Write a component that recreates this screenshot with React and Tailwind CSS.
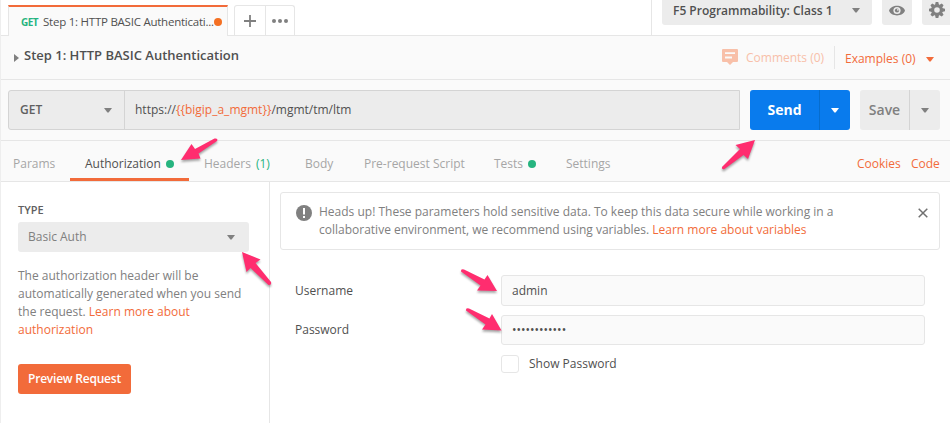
import React from "react";

const GEAR_TEETH = [0, 45, 90, 135, 180, 225, 270, 315];

function Caret({ className = "" }) {
  return (
    <svg className={`block shrink-0 ${className}`} width="8" height="5" viewBox="0 0 8 5" fill="currentColor">
      <path d="M0 0h8L4.6 4.6h-1.2z" />
    </svg>
  );
}

function TopBar() {
  return (
    <div className="flex h-9 border-b border-[#e6e6e6] bg-white">
      <div className="ml-[7px] mt-[5px] flex h-[31px] w-[220px] shrink-0 items-center border-x border-t-2 border-x-[#e6e6e6] border-t-[#f26b3a] bg-[#fafafa] pl-3">
        <span className="w-[22px] text-[10px] font-bold leading-4 text-[#26b47f]"><span className="tracking-[-0.55px]">GET</span></span>
        <span className="w-[171px] whitespace-nowrap text-[11.5px] leading-4 tracking-[-0.24px]">Step 1: HTTP BASIC Authenticati...</span>
        <span className="h-2 w-2 shrink-0 rounded-full bg-[#f47023]" />
      </div>
      <div className="ml-[6px] mt-[5px] flex h-[30px] w-[61px] shrink-0 rounded-t-[3px] border-x border-t border-[#e6e6e6] text-[#808080]">
        <div className="flex w-[31px] items-center justify-center border-r border-[#e6e6e6]">
          <svg width="12" height="12" viewBox="0 0 12 12" stroke="currentColor" strokeWidth="1.8"><path d="M6 0v12M0 6h12" /></svg>
        </div>
        <div className="flex w-[28px] items-center justify-center">
          <svg width="16" height="4" viewBox="0 0 16 4" fill="currentColor"><circle cx="2" cy="2" r="2" /><circle cx="8" cy="2" r="2" /><circle cx="14" cy="2" r="2" /></svg>
        </div>
      </div>
      <div className="ml-auto flex h-full w-[299px] shrink-0 border-l border-[#e6e6e6] pl-[10px] text-[#808080]">
        <div className="flex h-[25px] w-[210px] items-center justify-between rounded-b-[3px] bg-[#ececec] pb-[4px] pl-[11px] pr-3">
          <span className="whitespace-nowrap text-[12px] font-semibold leading-4 text-[#505050]">F5 Programmability: Class 1</span>
          <Caret />
        </div>
        <div className="ml-[10px] flex h-[25px] w-[30px] justify-center rounded-b-[3px] bg-[#ececec] pt-[5px]">
          <svg width="16" height="11" viewBox="0 0 16 11">
            <path d="M0 5.5C2-1 14-1 16 5.5C14 12 2 12 0 5.5Z" fill="#808080" />
            <circle cx="8" cy="5.5" r="3.6" fill="#ececec" />
            <circle cx="8" cy="5.5" r="2.1" fill="#808080" />
            <circle cx="8.9" cy="4.8" r=".9" fill="#ececec" />
          </svg>
        </div>
        <div className="ml-[10px] flex h-[25px] w-[28px] rounded-bl-[3px] bg-[#ececec] pl-[7px] pt-[2px]">
          <svg width="16" height="16" viewBox="-8 -8 16 16">
            {GEAR_TEETH.map((a) => (
              <path key={a} d="M-2-5L-1.3-8H1.3L2-5Z" fill="#808080" transform={`rotate(${a})`} />
            ))}
            <circle r="4.3" fill="none" stroke="#808080" strokeWidth="3" />
          </svg>
        </div>
      </div>
    </div>
  );
}

function TitleRow() {
  return (
    <div className="flex h-[44px] items-center border-b border-[#e6e6e6]">
      <svg className="ml-[13px] mt-px" width="5" height="8" viewBox="0 0 5 8"><path d="M0 0L5 4L0 8Z" fill="#808080" /></svg>
      <span className="ml-[5px] pb-[5px] text-[13px] font-semibold leading-5 text-[#505050]">Step 1: HTTP BASIC Authentication</span>
      <div className="ml-auto flex items-center text-[#f26b3a]">
        <svg className="mt-[-2px]" width="16" height="16" viewBox="0 0 16 16">
          <path d="M1 0H15Q16 0 16 1V12Q16 13 15 13H11L8 16L5 13H1Q0 13 0 12V1Q0 0 1 0Z" fill="#f8c0a9" />
          <path d="M3 4.2H13M3 8.5H10" stroke="#fafafa" strokeWidth="1.8" />
        </svg>
        <span className="ml-2 w-[88px] whitespace-nowrap text-[12px] leading-4 text-[#f8c0a9]">Comments (0)</span>
        <span className="h-[23px] w-px bg-[#e6e6e6]" />
        <span className="ml-[10px] w-[81px] whitespace-nowrap pt-[2px] text-[12px] leading-4">Examples (0)</span>
        <Caret className="mr-[16px] mt-[3px]" />
      </div>
    </div>
  );
}

function RequestRow() {
  return (
    <div className="flex h-[61px] border-b border-[#e6e6e6] pl-[7px] pt-[10px]">
      <div className="flex h-10 w-[732px] rounded-l-[3px] border border-[#d4d4d4] bg-[#ececec]">
        <div className="flex w-[116px] items-center justify-between border-r border-[#d4d4d4] pl-[11px] pr-3">
          <span className="text-[12px] font-semibold leading-4 text-[#606060]">GET</span>
          <Caret className="text-[#808080]" />
        </div>
        <span className="pl-[10px] pt-[11px] text-[12px] leading-4 text-[#505050]">
          <span>https://<span className="text-[#f26b3a]">{"{{bigip_a_mgmt}}"}</span>/mgmt/tm/ltm</span>
        </span>
      </div>
      <div className="ml-[10px] flex h-10 w-[100px] rounded-[3px] bg-[#097bed] text-white">
        <div className="flex w-[70px] items-center justify-center border-r border-[#066dce] text-[14px] font-bold leading-5"><span>Send</span></div>
        <div className="flex flex-1 items-center justify-center"><Caret /></div>
      </div>
      <div className="ml-[10px] flex h-10 w-[80px] rounded-[3px] bg-[#ececec] text-[#808080]">
        <div className="flex w-[50px] items-center justify-center border-r border-[#d4d4d4] text-[14px] font-semibold leading-5"><span>Save</span></div>
        <div className="flex flex-1 items-center justify-center"><Caret /></div>
      </div>
    </div>
  );
}

function Dot() {
  return <span className="ml-[5px] h-2 w-2 shrink-0 rounded-full bg-[#26b47f]" />;
}

function TabRow() {
  return (
    <div className="flex h-[41px] items-stretch whitespace-nowrap border-b border-[#e6e6e6] text-[12px] leading-4 text-[#a6a6a6]">
      <div className="flex w-[69px] items-center pt-[6px] pl-3"><span>Params</span></div>
      <div className="flex w-[119px] items-center border-b-[3px] border-[#f26b3a] pl-[15px] pt-[9px] text-[#505050]"><span>Authorization</span><Dot /></div>
      <div className="flex w-[101px] items-center pt-[6px] pl-[15px]"><span>Headers</span><span className="ml-[5px] text-[#26b47f]">(1)</span></div>
      <div className="flex w-[59px] items-center pt-[6px] pl-[15px]"><span>Body</span></div>
      <div className="flex w-[130px] items-center pt-[6px] pl-[15px]"><span>Pre-request Script</span></div>
      <div className="flex w-[72px] items-center pt-[6px] pl-[15px]"><span>Tests</span><Dot /></div>
      <div className="flex items-center pt-[6px] pl-[15px]"><span>Settings</span></div>
      <div className="ml-auto flex items-center pt-[6px] text-[#f26b3a]"><span className="w-[54px]">Cookies</span><span className="w-[39px]">Code</span></div>
    </div>
  );
}

function AuthSidebar() {
  return (
    <div className="flex w-[269px] shrink-0 flex-col items-start border-r border-[#e6e6e6] pl-[17px] pt-5 text-[12px]">
      <span className="text-[11px] font-semibold leading-4 text-[#606060]">TYPE</span>
      <div className="mt-1 flex h-[30px] w-[231px] items-center justify-between rounded-[3px] bg-[#ececec] pl-[10px] pr-[14px] text-[#808080]">
        <span className="leading-4">Basic Auth</span><Caret />
      </div>
      <p className="mt-[15px] whitespace-nowrap leading-[18px] text-[#808080]">
        The authorization header will be<br />automatically generated when you send<br />the request. <span className="text-[#f26b3a]">Learn more about<br />authorization</span>
      </p>
      <div className="mt-[25px] flex h-[30px] w-[113px] items-center justify-center rounded-[3px] bg-[#f26b3a] font-semibold text-white"><span className="whitespace-nowrap tracking-[-0.22px]">Preview Request</span></div>
    </div>
  );
}

function AuthForm() {
  return (
    <div className="min-w-0 flex-1 pl-[10px] pt-[10px] text-[12px] leading-4 text-[#505050]">
      <div className="flex h-[58px] w-[660px] rounded-[3px] border border-[#e6e6e6] pl-[15px] pt-[10px] text-[#808080]">
        <svg className="mt-[2px] shrink-0" width="16" height="16" viewBox="0 0 16 16"><circle cx="8" cy="8" r="8" fill="#808080" /><path d="M8 3v6.500M8 11v2" stroke="#fff" strokeWidth="2" /></svg>
        <p className="ml-[7px] whitespace-nowrap leading-[18px]">
          Heads up! These parameters hold sensitive data. To keep this data secure while working in a<br />
          collaborative environment, we recommend using variables. <span className="text-[#f26b3a]">Learn more about variables</span>
        </p>
        <svg className="ml-auto mr-[11px] mt-[5px]" width="10" height="10" viewBox="0 0 10 10" stroke="#707070" strokeWidth="1.5"><path d="M.7.7L9.3 9.3M9.3.7L.7 9.3" /></svg>
      </div>
      <div className="mt-[25px] flex h-[31px] items-center pl-[15px]">
        <span className="w-[206px]">Username</span>
        <div className="flex h-[31px] w-[424px] items-center rounded-[3px] border border-[#e6e6e6] bg-[#fafafa] pl-[10px]"><span>admin</span></div>
      </div>
      <div className="mt-[9px] flex h-[30px] items-center pl-[15px]">
        <span className="w-[206px] pb-px">Password</span>
        <div className="flex h-[30px] w-[424px] items-center rounded-[3px] border border-[#e6e6e6] bg-[#fafafa] pl-[10px]"><span>••••••••••••</span></div>
      </div>
      <div className="mt-[10px] flex h-[18px] items-center pl-[221px]">
        <span className="h-[18px] w-[18px] rounded-[3px] border border-[#e6e6e6] bg-white" /><span className="ml-[10px]">Show Password</span>
      </div>
    </div>
  );
}

const ARROWS = [
  "M181 160L191.500 144L195 149L214.500 138.500Q218.500 138 217 141L198.500 153.500L200.500 158.500Z",
  "M755 140L735.500 145L740 149L722 167Q721.500 170 724.500 169L743.500 155L748 159Z",
  "M242 252L246.500 272L250.500 268L268.500 285Q272 285.500 271 282L255.500 263L260.500 259.500Z",
  "M497 291L477 290.500L480.500 285.500L461 271.500Q460.500 268.500 464 269.500L484.500 279.500L487.500 275Z",
  "M501.500 330.500L482 329.500L485.500 324.500L466 310.500Q465.500 307.500 469 308.500L489.500 318.500L492 314Z",
];

export default function App() {
  return (
    <div className="relative flex h-[423px] w-[951px] flex-col overflow-hidden border-l border-r border-l-[#eeeeee] border-r-white bg-[#fafafa] font-['Open_Sans','Liberation_Sans',sans-serif] text-[#505050]">
      <TopBar />
      <TitleRow />
      <RequestRow />
      <TabRow />
      <div className="flex flex-1 bg-white">
        <AuthSidebar />
        <AuthForm />
      </div>
      <svg className="pointer-events-none absolute -left-px top-0 drop-shadow-[0_2px_1px_rgba(0,0,0,0.35)]" width="951" height="423" viewBox="0 0 951 423" fill="#ff2d6f">
        {ARROWS.map((d) => <path key={d} d={d} />)}
      </svg>
    </div>
  );
}
